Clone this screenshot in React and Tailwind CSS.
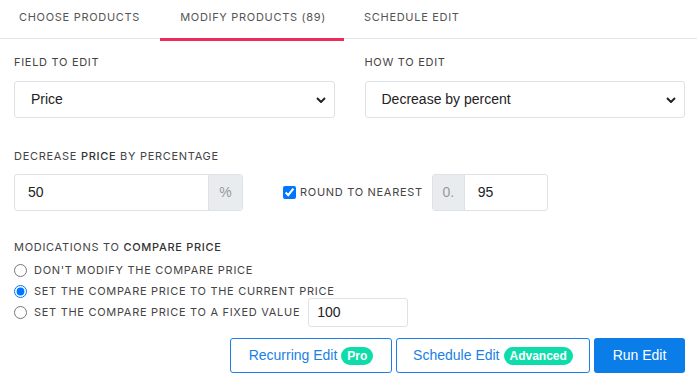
import React from "react";

const lab = "font-['Inter',sans-serif] text-[11px] tracking-[0.7px] uppercase text-[#444]";

function Chevron() {
  return (
    <svg width="10" height="6" viewBox="0 0 10 6" className="absolute right-[8px] top-1/2 -translate-y-1/2 pointer-events-none">
      <path d="M1 1l4 4 4-4" fill="none" stroke="#222" strokeWidth="2" />
    </svg>
  );
}

function Select({ value }) {
  return (
    <div className="relative h-[37px] border border-[#dee2e6] rounded-[3px] bg-white flex items-center pl-[16px] font-['Liberation_Sans',Arial,sans-serif] text-[14px] text-[#222]">
      {value}
      <Chevron />
    </div>
  );
}

export default function App() {
  return (
    <div className="w-[697px] h-[383px] bg-white overflow-hidden">
      <div className="relative h-[39px] border-b border-[#e6e6e6] flex">
        <div className={`${lab} text-[#555] pl-[19px] pr-[20px] flex items-center h-[33px] pt-[1px]`}>Choose Products</div>
        <div className="relative">
          <div className={`${lab} text-[#555] pl-[20px] pr-[18px] flex items-center h-[33px] pt-[1px]`}>Modify Products (89)</div>
          <div className="absolute left-0 right-0 top-[38px] h-[3px] bg-[#ee2b57]" />
        </div>
        <div className={`${lab} text-[#555] px-[20px] flex items-center h-[33px] pt-[1px]`}>Schedule Edit</div>
      </div>

      <div className="pl-[14px] pr-[12px]">
        <div className="grid grid-cols-2 gap-[30px] mt-[15px]">
          <div>
            <div className={`${lab} h-[16px] leading-[16px]`}>Field to edit</div>
            <div className="mt-[11px]"><Select value="Price" /></div>
          </div>
          <div>
            <div className={`${lab} h-[16px] leading-[16px]`}>How to edit</div>
            <div className="mt-[11px]"><Select value="Decrease by percent" /></div>
          </div>
        </div>

        <div className={`${lab} h-[16px] leading-[16px] mt-[30px]`}>Decrease <span className="font-medium text-[#333]">price</span> by percentage</div>
        <div className="mt-[10px] flex items-center">
          <div className="flex w-[229px] h-[37px] border border-[#dee2e6] rounded-[3px] overflow-hidden">
            <div className="flex-1 flex items-center pl-[13px] font-['Liberation_Sans',Arial,sans-serif] text-[14px] text-[#222]">50</div>
            <div className="w-[34px] bg-[#e9ecef] border-l border-[#dee2e6] flex items-center justify-center font-['Liberation_Sans',Arial,sans-serif] text-[14px] text-[#999]">%</div>
          </div>
          <label className="ml-[40px] flex items-center gap-[4px]">
            <input type="checkbox" checked readOnly className="w-[13px] h-[13px] m-0 accent-[#0075ff]" />
            <span className={`${lab}`}>Round to nearest</span>
          </label>
          <div className="ml-[9px] flex w-[116px] h-[37px] border border-[#dee2e6] rounded-[3px] overflow-hidden">
            <div className="w-[32px] bg-[#e9ecef] border-r border-[#dee2e6] flex items-center justify-center font-['Liberation_Sans',Arial,sans-serif] text-[14px] text-[#999]">0.</div>
            <div className="flex-1 flex items-center pl-[13px] font-['Liberation_Sans',Arial,sans-serif] text-[14px] text-[#222]">95</div>
          </div>
        </div>

        <div className={`${lab} h-[16px] leading-[16px] mt-[28px]`}>Modications to <span className="font-medium text-[#333]">compare price</span></div>
        <div className="mt-[5px] flex flex-col">
          <label className="h-[21px] flex items-center gap-[7px]">
            <input type="radio" name="r" readOnly className="w-[13px] h-[13px] m-0 accent-[#0075ff]" />
            <span className={lab}>Don't modify the compare price</span>
          </label>
          <label className="h-[21px] flex items-center gap-[7px]">
            <input type="radio" name="r" checked readOnly className="w-[13px] h-[13px] m-0 accent-[#0075ff]" />
            <span className={lab}>Set the compare price to the current price</span>
          </label>
          <label className="h-[21px] flex items-center gap-[7px]">
            <input type="radio" name="r" readOnly className="w-[13px] h-[13px] m-0 accent-[#0075ff]" />
            <span className={lab}>Set the compare price to a fixed value</span>
            <div className="ml-[1px] shrink-0 w-[100px] h-[29px] border border-[#dee2e6] rounded-[3px] flex items-center pl-[8px] font-['Liberation_Sans',Arial,sans-serif] text-[14px] text-[#222]">100</div>
          </label>
        </div>

        <div className="mt-[15px] flex justify-end gap-[4px] font-['Liberation_Sans',Arial,sans-serif] text-[14px]">
          <button className="w-[162px] h-[35px] border border-[#1a7fe6] rounded-[3px] text-[#1a7fe6] flex items-center justify-center gap-[4px]">
            Recurring Edit
            <span className="bg-[#0fdcab] text-white font-bold text-[12px] rounded-full px-[6px] h-[18px] flex items-center">Pro</span>
          </button>
          <button className="w-[194px] h-[35px] border border-[#1a7fe6] rounded-[3px] text-[#1a7fe6] flex items-center justify-center gap-[4px]">
            Schedule Edit
            <span className="bg-[#0fdcab] text-white font-bold text-[12px] rounded-full px-[6px] h-[18px] flex items-center">Advanced</span>
          </button>
          <button className="w-[91px] h-[35px] rounded-[3px] bg-[#0a7de8] text-white flex items-center justify-center">Run Edit</button>
        </div>
      </div>
    </div>
  );
}
